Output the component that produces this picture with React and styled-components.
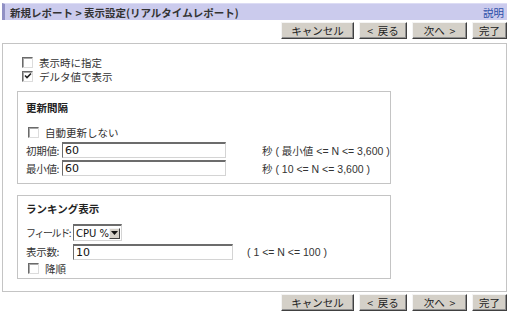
import React from "react";
import styled, { createGlobalStyle } from "styled-components";

const Global = createGlobalStyle`
  html, body { margin: 0; padding: 0; background: #fff; }
  body {
    font-family: "DejaVu Sans", "Noto Sans CJK JP", sans-serif;
    font-size: 11px;
    color: #222;
  }
`;

const Page = styled.div`
  width: 505px;
  padding: 3px 2px 0;
`;

const TitleBar = styled.div`
  height: 17px;
  box-sizing: border-box;
  background: #cbcbed;
  border-left: 3px solid #9090c4;
  border-top: 1px solid #dcdcf4;
  display: flex;
  align-items: center;
  justify-content: space-between;
  padding: 0 3px 0 5px;
`;

const Title = styled.div`
  font-family: "Noto Sans CJK JP", sans-serif;
  font-weight: bold;
  font-size: 10.5px;
  color: #333;
  white-space: pre;
`;

const Help = styled.a`
  font-family: "Noto Sans CJK JP", sans-serif;
  font-size: 10.5px;
  color: #2c4fa8;
  text-decoration: none;
`;

const ButtonRow = styled.div`
  display: flex;
  justify-content: flex-end;
  gap: 5px;
  margin-top: ${(p) => p.$top}px;
`;

const Btn = styled.button`
  width: ${(p) => p.$w}px;
  height: 17px;
  box-sizing: border-box;
  padding: 0;
  background: #d4d0c8;
  border: 1px solid;
  border-color: #f4f4f4 #404040 #404040 #f4f4f4;
  box-shadow: inset -1px -1px 0 #909090;
  font-family: "Noto Sans CJK JP", sans-serif;
  font-size: 10.5px;
  color: #222;
  line-height: 14px;
  white-space: pre;
`;

const Panel = styled.div`
  margin-top: 4px;
  height: 249px;
  box-sizing: border-box;
  border: 1px solid #c4c4c4;
  padding: 11px 0 0 14px;
`;

const CheckRow = styled.label`
  display: flex;
  align-items: center;
  height: 14px;
  gap: 6px;
  padding-left: ${(p) => p.$indent || 0}px;
  font-family: "Noto Sans CJK JP", sans-serif;
  font-size: 10.5px;
  color: #333;
`;

const Box = styled.span`
  width: 11px;
  height: 11px;
  box-sizing: border-box;
  background: #fff;
  border: 1px solid;
  border-color: #6a6a6a #dcdcdc #dcdcdc #6a6a6a;
  box-shadow: inset 1px 1px 0 #a8a8a8;
  display: inline-flex;
  align-items: center;
  justify-content: center;
`;

const CheckBox = ({ checked }) => (
  <Box>
    {checked && (
      <svg width="8" height="8" viewBox="0 0 8 8">
        <path d="M1 3.5 L3 5.5 L7 1.5" stroke="#222" strokeWidth="1.6" fill="none" />
      </svg>
    )}
  </Box>
);

const Group = styled.div`
  width: 374px;
  box-sizing: border-box;
  margin-top: ${(p) => p.$top}px;
  height: ${(p) => p.$h}px;
  border: 1px solid #c4c4c4;
  padding: ${(p) => p.$pt}px 0 0 8px;
`;

const GroupTitle = styled.div`
  font-family: "Noto Sans CJK JP", sans-serif;
  font-weight: bold;
  font-size: 10.5px;
  color: #222;
  height: 14px;
  line-height: 14px;
  margin-bottom: ${(p) => p.$mb}px;
`;

const FieldRow = styled.div`
  display: flex;
  align-items: center;
  height: ${(p) => p.$h || 18}px;
  margin-top: ${(p) => p.$top || 0}px;
`;

const Label = styled.span`
  width: ${(p) => p.$w}px;
  font-family: "Noto Sans CJK JP", sans-serif;
  font-size: ${(p) => p.$fs ?? 10.5}px;
  color: #333;
  flex: none;
  white-space: nowrap;
  letter-spacing: ${(p) => p.$ls ?? -0.3}px;
  overflow: hidden;
`;

const Input = styled.div`
  width: ${(p) => p.$w}px;
  height: ${(p) => p.$h || 16}px;
  box-sizing: border-box;
  border-top: 2px solid #6c6c6c;
  border-left: 1px solid #6c6c6c;
  border-right: 1px solid #d4d4d4;
  border-bottom: 1px solid #d4d4d4;
  background: #fff;
  font-size: 11px;
  color: #111;
  padding-left: 2px;
  line-height: 13px;
  flex: none;
`;

const Hint = styled.span`
  margin-left: ${(p) => p.$ml}px;
  font-size: 10.5px;
  color: #333;
  white-space: pre;
  font-family: "Liberation Sans", "Noto Sans CJK JP", sans-serif;
`;

const Select = styled.div`
  width: 49px;
  height: 17px;
  box-sizing: border-box;
  border-top: 2px solid #6c6c6c;
  border-left: 1px solid #6c6c6c;
  border-right: 1px solid #d4d4d4;
  border-bottom: 1px solid #d4d4d4;
  display: flex;
  align-items: center;
  justify-content: space-between;
  padding: 0 1px 0 2px;
  font-size: 10px;
  color: #111;
  white-space: nowrap;
  flex: none;
`;

const Arrow = styled.span`
  width: 11px;
  height: 11px;
  box-sizing: border-box;
  background: #d4d0c8;
  border: 1px solid;
  border-color: #f4f4f4 #404040 #404040 #f4f4f4;
  display: inline-flex;
  align-items: center;
  justify-content: center;
  flex: none;
`;

export default function App() {
  return (
    <>
      <Global />
      <Page>
        <TitleBar>
          <Title>新規レポート {">"} 表示設定(リアルタイムレポート)</Title>
          <Help href="#">説明</Help>
        </TitleBar>
        <ButtonRow $top={2}>
          <Btn $w={73}>キャンセル</Btn>
          <Btn $w={48}>{"<  戻る"}</Btn>
          <Btn $w={55}>{"次へ  >"}</Btn>
          <Btn $w={35}>完了</Btn>
        </ButtonRow>
        <Panel>
          <CheckRow $indent={5}>
            <CheckBox />
            表示時に指定
          </CheckRow>
          <CheckRow $indent={5}>
            <CheckBox checked />
            デルタ値で表示
          </CheckRow>
          <Group $top={8} $h={93} $pt={9}>
            <GroupTitle $mb={10}>更新間隔</GroupTitle>
            <CheckRow $indent={2}>
              <CheckBox />
              自動更新しない
            </CheckRow>
            <FieldRow $top={2}>
              <Label $w={36}>初期値:</Label>
              <Input $w={164}>60</Input>
              <Hint $ml={36}>秒 ( 最小値 &lt;= N &lt;= 3,600 )</Hint>
            </FieldRow>
            <FieldRow>
              <Label $w={36}>最小値:</Label>
              <Input $w={164}>60</Input>
              <Hint $ml={36}>秒 ( 10 &lt;= N &lt;= 3,600 )</Hint>
            </FieldRow>
          </Group>
          <Group $top={11} $h={84} $pt={6}>
            <GroupTitle $mb={7}>ランキング表示</GroupTitle>
            <FieldRow $h={19}>
              <Label $w={47} $fs={10} $ls={-1.4}>フィールド:</Label>
              <Select>
                CPU %
                <Arrow>
                  <svg width="7" height="4" viewBox="0 0 7 4">
                    <path d="M0 0 H7 L3.5 4 Z" fill="#111" />
                  </svg>
                </Arrow>
              </Select>
            </FieldRow>
            <FieldRow $h={19}>
              <Label $w={47}>表示数:</Label>
              <Input $w={160}>10</Input>
              <Hint $ml={14}>( 1 &lt;= N &lt;= 100 )</Hint>
            </FieldRow>
            <CheckRow $indent={2}>
              <CheckBox />
              降順
            </CheckRow>
          </Group>
        </Panel>
        <ButtonRow $top={2}>
          <Btn $w={73}>キャンセル</Btn>
          <Btn $w={48}>{"<  戻る"}</Btn>
          <Btn $w={55}>{"次へ  >"}</Btn>
          <Btn $w={35}>完了</Btn>
        </ButtonRow>
      </Page>
    </>
  );
}
